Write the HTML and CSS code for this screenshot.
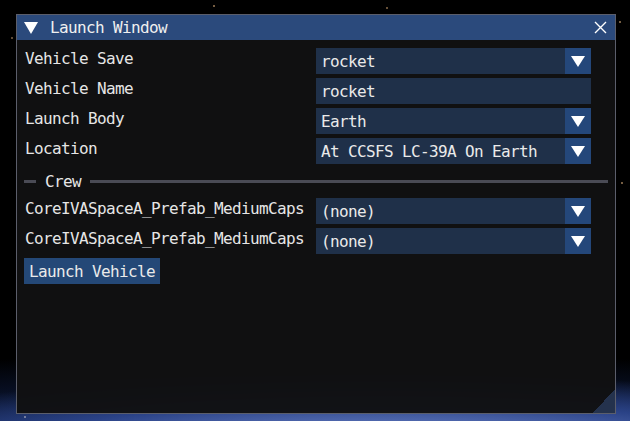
FILE: index.html
```html
<!DOCTYPE html>
<html lang="en">
<head>
    <meta charset="UTF-8">
    <meta name="viewport" content="width=device-width, initial-scale=1.0">
    <title>Launch Window</title>
    <link rel="stylesheet" href="styles.css">
</head>
<body>
    <div class="scene">
        <div class="window">
            <div class="titlebar">
                <span class="collapse"></span>
                <span class="title">Launch Window</span>
                <svg class="close" width="13" height="13" viewBox="0 0 13 13">
                    <path d="M1 1 L12 12 M12 1 L1 12" stroke="#fff" stroke-width="1.4" fill="none"/>
                </svg>
            </div>

            <div class="content">
                <div class="row">
                    <span class="label">Vehicle Save</span>
                    <div class="combo"><span class="value">rocket</span><span class="arrow"></span></div>
                </div>
                <div class="row">
                    <span class="label">Vehicle Name</span>
                    <div class="input"><span class="value">rocket</span></div>
                </div>
                <div class="row">
                    <span class="label">Launch Body</span>
                    <div class="combo"><span class="value">Earth</span><span class="arrow"></span></div>
                </div>
                <div class="row">
                    <span class="label">Location</span>
                    <div class="combo"><span class="value">At CCSFS LC-39A On Earth</span><span class="arrow"></span></div>
                </div>

                <div class="separator">
                    <span class="line short"></span>
                    <span class="sep-text">Crew</span>
                    <span class="line"></span>
                </div>

                <div class="row">
                    <span class="label">CoreIVASpaceA_Prefab_MediumCaps</span>
                    <div class="combo"><span class="value">(none)</span><span class="arrow"></span></div>
                </div>
                <div class="row">
                    <span class="label">CoreIVASpaceA_Prefab_MediumCaps</span>
                    <div class="combo"><span class="value">(none)</span><span class="arrow"></span></div>
                </div>

                <div class="actions">
                    <button class="button">Launch Vehicle</button>
                </div>
            </div>

            <div class="grip"></div>
        </div>
    </div>
</body>
</html>
```

FILE: styles.css
```css
* { box-sizing: border-box; }
html, body { margin: 0; padding: 0; }
body {
    font-family: "DejaVu Sans Mono", "Liberation Mono", monospace;
    font-size: 16px; letter-spacing: -0.63px;
    color: #e6e6e6; background: #000;
}

/* space backdrop with the planet glow along the bottom */
.scene {
    width: 630px; height: 421px; overflow: hidden;
    padding: 14px 0 0 16px;
    background:
        radial-gradient(1px 1px at 214px 6px, #c9a070 50%, transparent 100%),
        radial-gradient(1px 1px at 387px 8px, #b08a60 50%, transparent 100%),
        radial-gradient(1px 1px at 620px 22px, #c9a070 50%, transparent 100%),
        radial-gradient(1px 1px at 12px 38px, #a08060 50%, transparent 100%),
        radial-gradient(1px 1px at 622px 183px, #c9a070 50%, transparent 100%),
        radial-gradient(1px 1px at 25px 417px, #b0b0c0 50%, transparent 100%),
        radial-gradient(ellipse 620px 80px at 62% 108%, #95a2d6 0%, #5a72b8 35%, #2a4286 65%, transparent 100%),
        radial-gradient(ellipse 900px 120px at 50% 112%, #1a3068 0%, #0c1838 60%, transparent 100%),
        #000;
}

.window {
    position: relative;
    width: 600px; height: 400px;
    border: 1px solid #5b5e6b;
    background: rgba(17, 17, 18, 0.97);
    display: flex; flex-direction: column;
}

.titlebar {
    height: 25px; flex: none;
    background: #2b4a7c;
    display: flex; align-items: center;
    padding: 0 7px;
}
.collapse {
    width: 0; height: 0;
    border-left: 7px solid transparent; border-right: 7px solid transparent;
    border-top: 12px solid #fff;
    margin-right: 12px;
}
.title { flex: 1; color: #f0f0f0; }
.close { margin-right: 1px; }

.content {
    padding: 8px 7px 0 7px;
    display: flex; flex-direction: column; gap: 4px;
}

.row {
    display: grid; grid-template-columns: 292px 275px;
    height: 26px;
}
/* labels sit a little above the frame centre */
.label { white-space: nowrap; padding-left: 1px; line-height: 21px; align-self: start; }

.combo, .input {
    height: 26px; background: #1f3049;
    display: flex; align-items: center;
}
.value { flex: 1; padding-left: 5px; color: #eaeaea; white-space: nowrap; }
.arrow {
    width: 26px; height: 26px; background: #24477a;
    display: flex; align-items: center; justify-content: center;
}
.arrow::after {
    content: ""; width: 0; height: 0;
    border-left: 7px solid transparent; border-right: 7px solid transparent;
    border-top: 11px solid #fff;
}

.separator {
    height: 26px; display: flex; align-items: center;
}
.line { flex: 1; height: 3px; background: #4a4b55; }
.line.short { flex: none; width: 12px; }
.sep-text { padding: 0 9px 0 9px; }

.actions { display: flex; }
.button {
    font: inherit; letter-spacing: inherit; color: #eaeaea;
    background: #244877; border: none;
    height: 26px; padding: 0 5px;
}

/* resize handle in the lower right corner */
.grip {
    position: absolute; right: 0; bottom: 0;
    width: 22px; height: 24px;
    background: linear-gradient(to top left, #24324d 50%, transparent 50%);
}
```
